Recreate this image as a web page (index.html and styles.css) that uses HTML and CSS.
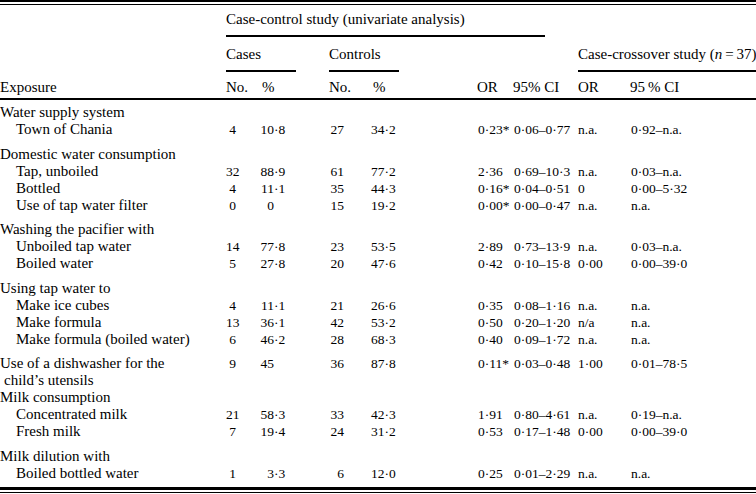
FILE: index.html
```html
<!DOCTYPE html>
<html lang="en">
<head>
<meta charset="utf-8">
<title>Case-control and case-crossover study</title>
<link rel="stylesheet" href="styles.css">
</head>
<body>
<div class="tbl">
  <div class="toprule"></div>
  <div class="hrow r1">
    <div class="span-cc">Case-control study (univariate analysis)<div class="rule w-cc"></div></div>
  </div>
  <div class="hrow r2">
    <div class="c-cases">Cases<div class="rule w-sub"></div></div>
    <div class="c-controls">Controls<div class="rule w-sub"></div></div>
    <div class="c-cross">Case-crossover study (<i>n</i>&#8201;=&#8201;37)<div class="rule w-cross"></div></div>
  </div>
  <div class="hrow r3">
    <div>Exposure</div>
    <div>No.</div>
    <div class="hp">%</div>
    <div>No.</div>
    <div class="hp">%</div>
    <div>OR</div>
    <div>95% CI</div>
    <div>OR</div>
    <div>95&#8201;% CI</div>
  </div>

  <div class="body">
    <div class="group">
      <div class="row"><div class="lbl">Water supply system</div></div>
      <div class="row"><div class="lbl sub">Town of Chania</div><div class="n1">4</div><div class="p1"><span class="int">10</span>·8</div><div class="n2">27</div><div class="p2"><span class="int">34</span>·2</div><div class="or">0·23*</div><div class="ci">0·06–0·77</div><div class="or2">n.a.</div><div class="ci2">0·92–n.a.</div></div>
    </div>
    <div class="group">
      <div class="row"><div class="lbl">Domestic water consumption</div></div>
      <div class="row"><div class="lbl sub">Tap, unboiled</div><div class="n1">32</div><div class="p1"><span class="int">88</span>·9</div><div class="n2">61</div><div class="p2"><span class="int">77</span>·2</div><div class="or">2·36</div><div class="ci">0·69–10·3</div><div class="or2">n.a.</div><div class="ci2">0·03–n.a.</div></div>
      <div class="row"><div class="lbl sub">Bottled</div><div class="n1">4</div><div class="p1"><span class="int">11</span>·1</div><div class="n2">35</div><div class="p2"><span class="int">44</span>·3</div><div class="or">0·16*</div><div class="ci">0·04–0·51</div><div class="or2">0</div><div class="ci2">0·00–5·32</div></div>
      <div class="row"><div class="lbl sub">Use of tap water filter</div><div class="n1">0</div><div class="p1"><span class="int">0</span></div><div class="n2">15</div><div class="p2"><span class="int">19</span>·2</div><div class="or">0·00*</div><div class="ci">0·00–0·47</div><div class="or2">n.a.</div><div class="ci2">n.a.</div></div>
    </div>
    <div class="group">
      <div class="row"><div class="lbl">Washing the pacifier with</div></div>
      <div class="row"><div class="lbl sub">Unboiled tap water</div><div class="n1">14</div><div class="p1"><span class="int">77</span>·8</div><div class="n2">23</div><div class="p2"><span class="int">53</span>·5</div><div class="or">2·89</div><div class="ci">0·73–13·9</div><div class="or2">n.a.</div><div class="ci2">0·03–n.a.</div></div>
      <div class="row"><div class="lbl sub">Boiled water</div><div class="n1">5</div><div class="p1"><span class="int">27</span>·8</div><div class="n2">20</div><div class="p2"><span class="int">47</span>·6</div><div class="or">0·42</div><div class="ci">0·10–15·8</div><div class="or2">0·00</div><div class="ci2">0·00–39·0</div></div>
    </div>
    <div class="group">
      <div class="row"><div class="lbl">Using tap water to</div></div>
      <div class="row"><div class="lbl sub">Make ice cubes</div><div class="n1">4</div><div class="p1"><span class="int">11</span>·1</div><div class="n2">21</div><div class="p2"><span class="int">26</span>·6</div><div class="or">0·35</div><div class="ci">0·08–1·16</div><div class="or2">n.a.</div><div class="ci2">n.a.</div></div>
      <div class="row"><div class="lbl sub">Make formula</div><div class="n1">13</div><div class="p1"><span class="int">36</span>·1</div><div class="n2">42</div><div class="p2"><span class="int">53</span>·2</div><div class="or">0·50</div><div class="ci">0·20–1·20</div><div class="or2">n/a</div><div class="ci2">n.a.</div></div>
      <div class="row"><div class="lbl sub">Make formula (boiled water)</div><div class="n1">6</div><div class="p1"><span class="int">46</span>·2</div><div class="n2">28</div><div class="p2"><span class="int">68</span>·3</div><div class="or">0·40</div><div class="ci">0·09–1·72</div><div class="or2">n.a.</div><div class="ci2">n.a.</div></div>
    </div>
    <div class="group">
      <div class="row"><div class="lbl">Use of a dishwasher for the</div><div class="n1">9</div><div class="p1"><span class="int">45</span></div><div class="n2">36</div><div class="p2"><span class="int">87</span>·8</div><div class="or">0·11*</div><div class="ci">0·03–0·48</div><div class="or2">1·00</div><div class="ci2">0·01–78·5</div></div>
      <div class="row"><div class="lbl cont">child’s utensils</div></div>
    </div>
    <div class="group nogap">
      <div class="row"><div class="lbl">Milk consumption</div></div>
      <div class="row"><div class="lbl sub">Concentrated milk</div><div class="n1">21</div><div class="p1"><span class="int">58</span>·3</div><div class="n2">33</div><div class="p2"><span class="int">42</span>·3</div><div class="or">1·91</div><div class="ci">0·80–4·61</div><div class="or2">n.a.</div><div class="ci2">0·19–n.a.</div></div>
      <div class="row"><div class="lbl sub">Fresh milk</div><div class="n1">7</div><div class="p1"><span class="int">19</span>·4</div><div class="n2">24</div><div class="p2"><span class="int">31</span>·2</div><div class="or">0·53</div><div class="ci">0·17–1·48</div><div class="or2">0·00</div><div class="ci2">0·00–39·0</div></div>
    </div>
    <div class="group">
      <div class="row"><div class="lbl">Milk dilution with</div></div>
      <div class="row"><div class="lbl sub">Boiled bottled water</div><div class="n1">1</div><div class="p1"><span class="int">3</span>·3</div><div class="n2">6</div><div class="p2"><span class="int">12</span>·0</div><div class="or">0·25</div><div class="ci">0·01–2·29</div><div class="or2">n.a.</div><div class="ci2">n.a.</div></div>
    </div>
  </div>
  <div class="botrule"></div>
</div>
</body>
</html>
```

FILE: styles.css
```css
html, body {
  margin: 0;
  padding: 0;
  background: #ffffff;
}

body {
  font-family: "Liberation Serif", "Times New Roman", serif;
  font-size: 15px;
  line-height: 17px;
  color: #000000;
}

.tbl {
  width: 756px;
}

.toprule {
  height: 2px;
  border-top: 2px solid #000;
  border-bottom: 1px solid #000;
}

.botrule {
  height: 2px;
  border-top: 3px solid #000;
  border-bottom: 1px solid #000;
}

.hrow,
.row {
  display: grid;
  grid-template-columns: 226px 34px 69px 42px 106px 36px 65px 52px 1fr;
  white-space: nowrap;
}

.row {
  align-items: baseline;
}

.rule {
  height: 2px;
  background: #000;
}

.r1 {
  padding-top: 6px;
}

.r1 .rule {
  margin-top: 7px;
}

.span-cc {
  grid-column: 2 / 8;
}

.w-cc {
  width: 319px;
}

.r2 {
  padding-top: 9px;
}

.r2 .rule {
  margin-top: 7px;
}

.c-cases {
  grid-column: 2 / 4;
}

.c-controls {
  grid-column: 4 / 6;
}

.c-cross {
  grid-column: 8 / 10;
}

.w-sub {
  width: 70px;
}

.w-cross {
  width: 100%;
}

.r3 {
  padding-top: 7px;
  padding-bottom: 2px;
  border-bottom: 2px solid #000;
}

.hp {
  padding-left: 2px;
}

.body {
  padding-top: 4px;
  padding-bottom: 5px;
}

.group + .group {
  padding-top: 7.5px;
}

.group + .group.nogap {
  padding-top: 0;
}

.lbl {
  grid-column: 1;
}

.sub {
  padding-left: 16px;
}

.cont {
  padding-left: 4px;
}

.n1,
.p1,
.n2,
.p2,
.or,
.ci,
.or2,
.ci2 {
  font-size: 13.5px;
}

.n1 {
  grid-column: 2;
  text-align: right;
  padding-right: 24px;
}

.p1 {
  grid-column: 3;
  padding-left: 0.5px;
}

.n2 {
  grid-column: 4;
  text-align: right;
  padding-right: 27px;
}

.p2 {
  grid-column: 5;
}

.int {
  display: inline-block;
  width: 13.5px;
  text-align: right;
}

.or {
  grid-column: 6;
  padding-left: 1px;
}

.ci {
  grid-column: 7;
  padding-left: 1px;
}

.or2 {
  grid-column: 8;
}

.ci2 {
  grid-column: 9;
  padding-left: 1px;
}
```
